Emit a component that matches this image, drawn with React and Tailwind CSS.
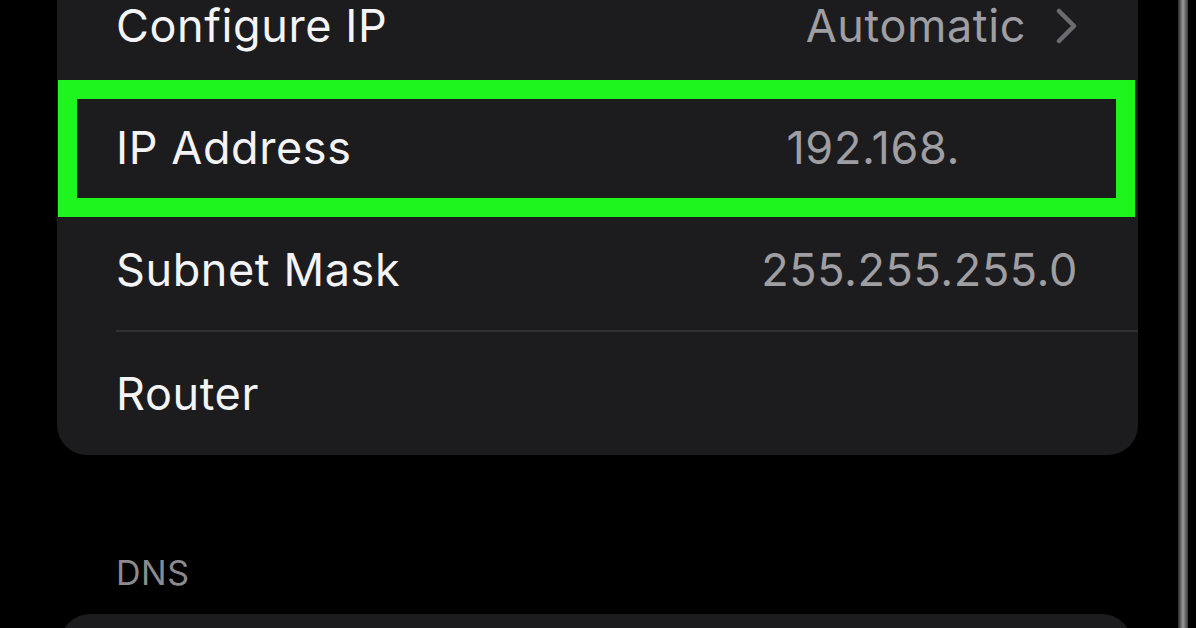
const ROWS = [
  { label: 'Configure IP', value: 'Automatic', chevron: true },
  { label: 'IP Address', value: '192.168.', highlight: true },
  { label: 'Subnet Mask', value: '255.255.255.0' },
  { label: 'Router', value: '' },
]

function Chevron() {
  return (
    <svg width="22" height="36" viewBox="0 0 22 36" fill="none" className="ml-[30px]">
      <path d="M3 3 L18 18 L3 33" stroke="#6b6b70" strokeWidth="4.5" strokeLinecap="round" strokeLinejoin="round" />
    </svg>
  )
}

function Row({ row, divider, first }) {
  // the first row is scrolled partly out of view, so it is shorter
  const box = first ? 'h-[86px] items-start pt-[3px]' : 'h-[123px] items-center'
  return (
    <div className="relative">
      <div className={`ml-[59px] pr-[60px] flex justify-between ${box} ${divider ? 'border-b-2 border-[#313134]' : ''}`}>
        <span className="text-[#f4f4f6] text-[45px] leading-none tracking-[0.6px]">{row.label}</span>
        <div className={`flex items-center ${row.highlight ? 'mr-[118px]' : ''}`}>
          <span className="text-[#9e9ea3] text-[45px] leading-none tracking-[0.6px]">{row.value}</span>
          {row.chevron && <Chevron />}
        </div>
      </div>
      {/* annotation box drawn over the row */}
      {row.highlight && (
        <div className="absolute left-[1px] right-[3px] top-[-6px] bottom-[-8px] border-[19px] border-[#1ef51e] pointer-events-none" />
      )}
    </div>
  )
}

export default function App() {
  return (
    <div className="flex h-[628px] w-[1196px] bg-black overflow-hidden" style={{ fontFamily: 'Inter, "Liberation Sans", sans-serif' }}>
      <div className="flex-1 pl-[57px] pr-[40px]">
        <div className="rounded-b-[30px] bg-[#1c1c1e]">
          {ROWS.map((r, i) => (
            <Row key={r.label} row={r} first={i === 0} divider={i === 2} />
          ))}
        </div>

        <div className="pl-[59px] mt-[101px] text-[#8a8a8f] text-[34px] leading-none tracking-[0.5px]">DNS</div>

        <div className="mt-[24px] ml-[3px] mr-[6px] h-[80px] rounded-[30px] bg-[#1c1c1e]" />
      </div>

      <div className="w-[10px] h-full bg-gradient-to-r from-[#2a2a2a] via-[#9a9a9a] to-[#3a3a3a]" />
      <div className="w-[8px] h-full" />
    </div>
  )
}
